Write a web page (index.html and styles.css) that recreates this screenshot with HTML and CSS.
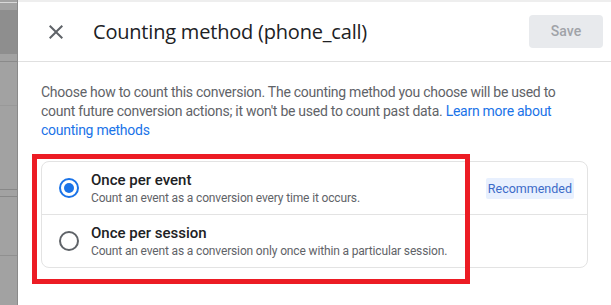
FILE: index.html
```html
<!DOCTYPE html>
<html>
<head>
	<title>Counting method</title>
	<link rel="stylesheet" href="styles.css">
</head>
<body>
	<div class="backdrop"></div>
	<div class="panel">
		<div class="header">
			<span class="close">
				<svg width="24" height="24" viewBox="0 0 24 24"><path d="M19 6.41 17.59 5 12 10.59 6.41 5 5 6.41 10.59 12 5 17.59 6.41 19 12 13.41 17.59 19 19 17.59 13.41 12z" fill="#5f6368"/></svg>
			</span>
			<div class="title">Counting method (phone_call)</div>
			<button class="save">Save</button>
		</div>
		<div class="content">
			<p class="intro">Choose how to count this conversion. The counting method you choose will be used to count future conversion actions; it won't be used to count past data. <a href="#">Learn more about counting methods</a></p>
			<div class="card">
				<div class="row">
					<span class="radio checked"></span>
					<div class="text">
						<div class="name">Once per event</div>
						<div class="desc">Count an event as a conversion every time it occurs.</div>
					</div>
					<span class="chip">Recommended</span>
				</div>
				<div class="row">
					<span class="radio"></span>
					<div class="text">
						<div class="name">Once per session</div>
						<div class="desc">Count an event as a conversion only once within a particular session.</div>
					</div>
				</div>
			</div>
		</div>
	</div>
	<div class="mark"></div>
</body>
</html>
```

FILE: styles.css
```css
*{
	margin: 0px;
	padding: 0px;
	box-sizing: border-box;
}
body{
	width: 611px;
	height: 305px;
	overflow: hidden;
	display: flex;
	font-family: Roboto, "Liberation Sans", Arial, sans-serif;
	position: relative;
	background: #fff;
}
.backdrop{
	width: 18px;
	flex: none;
	border-right: 1px solid #8a8a8a;
	background:
		linear-gradient(#d8d8d8, #d8d8d8) 0 2px / 100% 1px no-repeat,
		linear-gradient(#8e8e8e, #8e8e8e) 0 10px / 100% 44px no-repeat,
		linear-gradient(#8a8a8a, #8a8a8a) 0 61px / 100% 1px no-repeat,
		linear-gradient(#999, #999) 0 105px / 100% 1px no-repeat,
		linear-gradient(#888, #888) 0 189px / 100% 1px no-repeat,
		linear-gradient(#888, #888) 0 196px / 100% 1px no-repeat,
		linear-gradient(#909090, #909090) 0 255px / 100% 1px no-repeat,
		#a2a2a2;
}
.panel{
	flex: 1;
	border-top: 2px solid #eeeeee;
}
.header{
	height: 60px;
	display: flex;
	align-items: center;
	padding: 0 8px 0 26px;
	border-bottom: 1px solid #e0e0e0;
}
.close{
	width: 24px;
	height: 24px;
	display: block;
}
.title{
	flex: 1;
	margin-left: 25px;
	font-size: 20px;
	color: #202124;
	font-family: "Open Sans", Roboto, sans-serif;
	letter-spacing: -0.2px;
}
.save{
	width: 74px;
	height: 33px;
	border: none;
	border-radius: 4px;
	background: #e8eaed;
	color: #a0a3a8;
	font-family: Roboto, sans-serif;
	font-size: 14px;
	font-weight: 500;
	margin-top: -1px;
}
.content{
	padding: 21px 23px 0 23px;
}
.intro{
	font-size: 14px;
	line-height: 19px;
	color: #5f6368;
	letter-spacing: -0.27px;
}
.intro a{
	color: #1a73e8;
	text-decoration: none;
}
.card{
	margin-top: 21px;
	border: 1px solid #e3e3e3;
	border-radius: 8px;
}
.row{
	display: flex;
	align-items: center;
	padding: 8px 13px 8px 17px;
	min-height: 52px;
}
.row + .row{
	border-top: 1px solid #e3e3e3;
	min-height: 53px;
}
.radio{
	width: 20px;
	height: 20px;
	border: 2px solid #5f6368;
	border-radius: 50%;
	flex: none;
	position: relative;
}
.radio.checked{
	border-color: #1a73e8;
}
.radio.checked::after{
	content: "";
	position: absolute;
	left: 3px;
	top: 3px;
	width: 10px;
	height: 10px;
	border-radius: 50%;
	background: #1a73e8;
}
.text{
	flex: 1;
	margin-left: 12px;
}
.name{
	font-size: 15px;
	line-height: 19px;
	font-weight: 500;
	color: #202124;
}
.desc{
	font-size: 12px;
	line-height: 16px;
	color: #5f6368;
	letter-spacing: -0.15px;
}
.chip{
	background: #e8f0fe;
	color: #3c6bc8;
	font-size: 12.5px;
	line-height: 21px;
	padding: 0 2px;
	border-radius: 2px;
}
.mark{
	position: absolute;
	left: 32px;
	top: 154px;
	width: 438px;
	height: 130px;
	border: 5px solid #ec1c24;
}
```
